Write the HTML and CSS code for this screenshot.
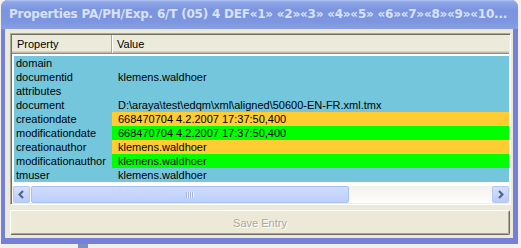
FILE: index.html
```html
<!DOCTYPE html>
<html>
<head>
    <title>Properties</title>
    <link rel="stylesheet" href="styles.css">
</head>
<body>
    <div class="window">
        <div class="titlebar">
            <span class="title">Properties PA/PH/Exp. 6/T (05) 4 DEF«1» «2»«3» «4»«5» «6»«7»«8»«9»«10...</span>
        </div>
        <div class="client">
            <div class="listview">
                <div class="header">
                    <div class="hcol prop">Property</div>
                    <div class="hcol val">Value</div>
                </div>
                <div class="rows">
                    <div class="row"><div class="cell prop">domain</div><div class="cell val"></div></div>
                    <div class="row"><div class="cell prop">documentid</div><div class="cell val">klemens.waldhoer</div></div>
                    <div class="row"><div class="cell prop">attributes</div><div class="cell val"></div></div>
                    <div class="row"><div class="cell prop">document</div><div class="cell val">D:\araya\test\edqm\xml\aligned\50600-EN-FR.xml.tmx</div></div>
                    <div class="row"><div class="cell prop">creationdate</div><div class="cell val orange">668470704 4.2.2007 17:37:50,400</div></div>
                    <div class="row"><div class="cell prop">modificationdate</div><div class="cell val green">668470704 4.2.2007 17:37:50,400</div></div>
                    <div class="row"><div class="cell prop">creationauthor</div><div class="cell val orange">klemens.waldhoer</div></div>
                    <div class="row"><div class="cell prop">modificationauthor</div><div class="cell val green">klemens.waldhoer</div></div>
                    <div class="row"><div class="cell prop">tmuser</div><div class="cell val">klemens.waldhoer</div></div>
                </div>
                <div class="hscroll">
                    <div class="sb-btn">
                        <svg width="9" height="9" viewBox="0 0 9 9"><path d="M6 1 L2.5 4.5 L6 8" fill="none" stroke="#4d6185" stroke-width="2"/></svg>
                    </div>
                    <div class="sb-track">
                        <div class="sb-thumb">
                            <svg width="9" height="6" viewBox="0 0 9 6"><path d="M0.5 0v6M2.5 0v6M4.5 0v6M6.5 0v6" stroke="#9fb3ea" stroke-width="1"/><path d="M1.5 0v6M3.5 0v6M5.5 0v6M7.5 0v6" stroke="#f2f6ff" stroke-width="1"/></svg>
                        </div>
                    </div>
                    <div class="sb-btn">
                        <svg width="9" height="9" viewBox="0 0 9 9"><path d="M3 1 L6.5 4.5 L3 8" fill="none" stroke="#4d6185" stroke-width="2"/></svg>
                    </div>
                </div>
            </div>
            <button class="save" disabled>Save Entry</button>
        </div>
    </div>
    <div class="below">
        <div class="taskbit"></div>
    </div>
</body>
</html>
```

FILE: styles.css
```css
body {
    margin: 0;
    background-color: #f1f0ec;
    font-family: "Liberation Sans", Arial, sans-serif;
    font-size: 11px;
    color: #000;
}

.window {
    margin-left: 1px;
    width: 517px;
    height: 244px;
    box-sizing: border-box;
    background-color: #7780d9;
    border-radius: 7px 7px 0 0;
    padding: 0 5px 6px 4px;
    display: flex;
    flex-direction: column;
}

.titlebar {
    height: 29px;
    margin: 0 -5px 0 -4px;
    border-radius: 7px 7px 0 0;
    background: linear-gradient(to bottom, #b2c4f2 0, #8ea6e7 2px, #7c94df 10px, #7d96e0 22px, #889fe3 29px);
    display: flex;
    align-items: center;
    padding-left: 8px;
    padding-bottom: 1px;
    box-sizing: border-box;
    overflow: hidden;
}

.title {
    font-family: "DejaVu Sans", Verdana, sans-serif;
    font-weight: bold;
    font-size: 12px;
    letter-spacing: -0.22px;
    color: #d8e2f7;
    white-space: nowrap;
}

.client {
    flex: 1;
    background-color: #ece9d8;
    padding: 4px 2px 3px 5px;
    display: flex;
    flex-direction: column;
}

.listview {
    height: 172px;
    box-sizing: border-box;
    border-top: 1px solid #aca899;
    border-left: 1px solid #aca899;
    border-right: 1px solid #ffffff;
    border-bottom: 1px solid #ffffff;
    box-shadow: inset 1px 1px 0 #716f64, inset -1px -1px 0 #f1efe2;
    padding: 1px;
    background-color: #fff;
    display: flex;
    flex-direction: column;
}

.header {
    display: flex;
    height: 18px;
    background-color: #ebeadb;
    border-bottom: 1px solid #918d7e;
    box-shadow: inset 0 -1px 0 #c0bcae, inset 0 -2px 0 #d6d2c2;
}

.hcol {
    line-height: 16px;
    padding-top: 1px;
}

.hcol.prop {
    width: 94px;
    padding-left: 5px;
    border-right: 1px solid #aca899;
    box-shadow: 1px 0 0 #fff;
}

.hcol.val {
    flex: 1;
    padding-left: 5px;
}

.rows {
    margin: 2px 0 0 2px;
}

.row {
    display: flex;
    height: 14px;
    line-height: 14px;
    background-color: #73c6dc;
}

.cell {
    white-space: nowrap;
}

.cell.prop {
    width: 96px;
    padding-left: 2px;
}

.cell.val {
    flex: 1;
    padding-left: 6px;
}

.orange {
    background-color: #ffcc33;
}

.green {
    background-color: #00ff00;
}

.hscroll {
    margin-top: auto;
    height: 17px;
    display: flex;
    padding-left: 1px;
    background: linear-gradient(to bottom, #f3f1ec, #fefefb);
}

.sb-btn {
    width: 15px;
    height: 15px;
    border: 1px solid #b6c9f5;
    border-radius: 2px;
    background: linear-gradient(to bottom, #d5e0fc, #b9cbf8);
    display: flex;
    align-items: center;
    justify-content: center;
}

.sb-track {
    flex: 1;
    display: flex;
    padding-left: 1px;
}

.sb-thumb {
    width: 318px;
    box-sizing: border-box;
    border: 1px solid #a9c0f4;
    border-radius: 2px;
    background: linear-gradient(to bottom, #cfdcfd, #bdcffb);
    display: flex;
    align-items: center;
    justify-content: center;
}

.save {
    margin-top: 5px;
    width: 500px;
    height: 25px;
    box-sizing: border-box;
    font-family: "Liberation Sans", Arial, sans-serif;
    font-size: 11px;
    color: #aca899;
    text-shadow: 1px 1px 0 #fff;
    background-color: #ece9d8;
    border-top: 1px solid #fff;
    border-left: 1px solid #fff;
    border-right: 1px solid #716f64;
    border-bottom: 1px solid #716f64;
    box-shadow: inset -1px -1px 0 #aca899;
    border-radius: 2px;
    padding: 0;
}

.below {
    height: 4px;
    display: flex;
}

.taskbit {
    margin-left: 78px;
    width: 10px;
    background-color: #7d8fbf;
}
```
